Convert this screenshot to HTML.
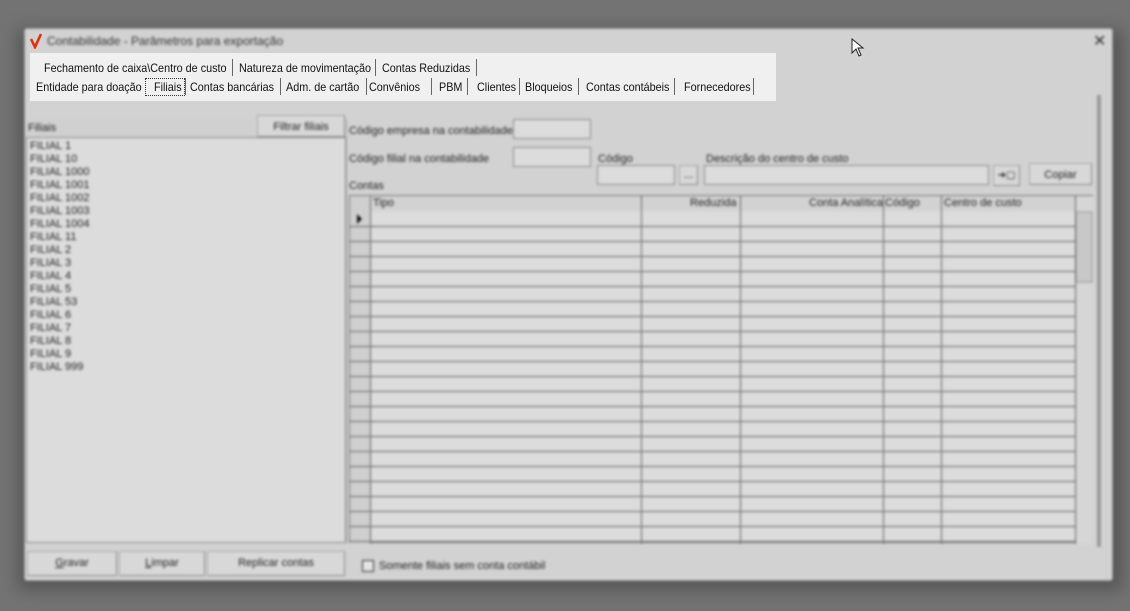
<!DOCTYPE html>
<html><head><meta charset="utf-8"><style>
*{box-sizing:border-box;margin:0;padding:0}
body{width:1130px;height:611px;background:#737373;overflow:hidden;position:relative;font-family:"Liberation Sans",sans-serif;font-size:11px;color:#222}
.abs{position:absolute}
#shadow{left:18px;top:30px;width:1104px;height:560px;background:#555;filter:blur(8px)}
#win{left:24px;top:28px;width:1089px;height:553px;background:#d2d2d2;border:1px solid #999;border-radius:3px;filter:blur(1.2px)}
.box{background:#dcdcdc;border:1px solid #8a8a8a}
.btn{background:#d8d8d8;border:1px solid #aaa;border-right-color:#888;border-bottom-color:#888;text-align:center;line-height:22px}
.t{position:absolute;white-space:nowrap}
#tabs{left:30px;top:53px;width:746px;height:48px;background:#f0f0f0;font-size:12px;color:#111}
.tx{position:absolute;white-space:nowrap;transform:scaleX(0.9);transform-origin:0 0;line-height:16px}
.sep{position:absolute;width:1px;height:17px;background:#666}
</style></head><body>
<div id="shadow" class="abs"></div>
<div id="win" class="abs">
  <div class="t" style="left:22px;top:5px;font-size:12px;color:#333">Contabilidade - Parâmetros para exportação</div>
  <div class="t" style="left:1068px;top:2px;font-size:16px;color:#333">✕</div>
  <div class="abs" style="left:1072px;top:66px;width:4px;height:452px;background:#999"></div>
  <div class="abs" style="left:0;top:90px;width:322px;height:424px;background:#d0d0d0;border-right:1px solid #aaa"></div>
  <div class="t" style="left:3px;top:93px">Filiais</div>
  <div class="abs btn" style="left:232px;top:86px;width:88px;height:22px">Filtrar filiais</div>
  <div class="abs box" style="left:1px;top:108px;width:320px;height:406px;line-height:13px;padding:2px 3px;font-size:11px">
  FILIAL 1<br>FILIAL 10<br>FILIAL 1000<br>FILIAL 1001<br>FILIAL 1002<br>FILIAL 1003<br>FILIAL 1004<br>FILIAL 11<br>FILIAL 2<br>FILIAL 3<br>FILIAL 4<br>FILIAL 5<br>FILIAL 53<br>FILIAL 6<br>FILIAL 7<br>FILIAL 8<br>FILIAL 9<br>FILIAL 999</div>
  <div class="t" style="left:324px;top:96px">Código empresa na contabilidade</div>
  <div class="abs box" style="left:488px;top:90px;width:78px;height:20px"></div>
  <div class="t" style="left:324px;top:124px">Código filial na contabilidade</div>
  <div class="abs box" style="left:488px;top:118px;width:78px;height:20px"></div>
  <div class="t" style="left:573px;top:124px">Código</div>
  <div class="abs box" style="left:572px;top:136px;width:78px;height:20px"></div>
  <div class="abs btn" style="left:654px;top:136px;width:19px;height:20px;line-height:18px">...</div>
  <div class="t" style="left:681px;top:124px">Descrição do centro de custo</div>
  <div class="abs box" style="left:679px;top:136px;width:285px;height:20px"></div>
  <div class="abs btn" style="left:968px;top:136px;width:27px;height:21px;line-height:19px;font-size:10px">➜▢</div>
  <div class="abs btn" style="left:1004px;top:134px;width:63px;height:22px">Copiar</div>
  <div class="t" style="left:324px;top:151px">Contas</div>
  <div class="abs" style="left:324px;top:166px;width:744px;height:348px;background:#dcdcdc;border:1px solid #777">
    <svg width="744" height="348" style="position:absolute;left:0;top:0">
      <rect x="0" y="0" width="744" height="15" fill="#d2d2d2"/>
      <rect x="0" y="0" width="20" height="348" fill="#cfcfcf"/>
      <rect x="725" y="0" width="18" height="348" fill="#d6d6d6"/>
      <rect x="726" y="16" width="16" height="70" fill="#c8c8c8" stroke="#999"/>
      <g stroke="#666" stroke-width="1">
        <line x1="20.5" y1="0" x2="20.5" y2="348"/>
        <line x1="291.5" y1="0" x2="291.5" y2="348"/>
        <line x1="390.5" y1="0" x2="390.5" y2="348"/>
        <line x1="533.5" y1="0" x2="533.5" y2="348"/>
        <line x1="591.5" y1="0" x2="591.5" y2="348"/>
        <line x1="725.5" y1="0" x2="725.5" y2="348"/>
      </g>
      <g stroke="#777" stroke-width="1.3" id="rows"></g>
      <polygon points="7,18 12,23 7,28" fill="#111"/>
    </svg>
    <div class="t" style="left:23px;top:1px">Tipo</div>
    <div class="t" style="left:340px;top:1px">Reduzida</div>
    <div class="t" style="left:459px;top:1px">Conta Analítica</div>
    <div class="t" style="left:535px;top:1px">Código</div>
    <div class="t" style="left:594px;top:1px">Centro de custo</div>
  </div>
  <div class="abs btn" style="left:2px;top:522px;width:90px;height:25px"><u>G</u>ravar</div>
  <div class="abs btn" style="left:94px;top:522px;width:86px;height:25px"><u>L</u>impar</div>
  <div class="abs btn" style="left:182px;top:522px;width:138px;height:25px">Replicar contas</div>
  <div class="abs" style="left:337px;top:531px;width:12px;height:12px;border:1px solid #333;background:#e4e4e4"></div>
  <div class="t" style="left:354px;top:531px">Somente filiais sem conta contábil</div>
</div>
<div id="tabs" class="abs">
  <div class="tx" style="left:14px;top:7px">Fechamento de caixa\Centro de custo</div>
  <div class="sep" style="left:202px;top:6px"></div>
  <div class="tx" style="left:209px;top:7px">Natureza de movimentação</div>
  <div class="sep" style="left:345px;top:6px"></div>
  <div class="tx" style="left:352px;top:7px">Contas Reduzidas</div>
  <div class="sep" style="left:446px;top:6px"></div>

  <div class="tx" style="left:6px;top:26px">Entidade para doação</div>
  <div class="abs" style="left:115px;top:25px;width:40px;height:18px;border:1px dotted #333"></div>
  <div class="tx" style="left:124px;top:26px">Filiais</div>
  <div class="sep" style="left:155px;top:25px"></div>
  <div class="tx" style="left:160px;top:26px">Contas bancárias</div>
  <div class="sep" style="left:250px;top:25px"></div>
  <div class="tx" style="left:256px;top:26px">Adm. de cartão</div>
  <div class="sep" style="left:336px;top:25px"></div>
  <div class="tx" style="left:339px;top:26px">Convênios</div>
  <div class="sep" style="left:401px;top:25px"></div>
  <div class="tx" style="left:409px;top:26px">PBM</div>
  <div class="sep" style="left:437px;top:25px"></div>
  <div class="tx" style="left:447px;top:26px">Clientes</div>
  <div class="sep" style="left:489px;top:25px"></div>
  <div class="tx" style="left:495px;top:26px">Bloqueios</div>
  <div class="sep" style="left:548px;top:25px"></div>
  <div class="tx" style="left:556px;top:26px">Contas contábeis</div>
  <div class="sep" style="left:644px;top:25px"></div>
  <div class="tx" style="left:654px;top:26px">Fornecedores</div>
  <div class="sep" style="left:723px;top:25px"></div>
</div>
<svg class="abs" style="left:30px;top:33px" width="12" height="16"><path d="M1 6 L5 14 L11 1" stroke="#e03010" stroke-width="2.6" fill="none"/></svg>
<svg class="abs" style="left:851px;top:38px" width="14" height="20"><path d="M1 1 L1 15 L5 11 L8 18 L10 17 L7 10 L12 10 Z" fill="#fff" stroke="#222" stroke-width="1"/></svg>
<script>
var g=document.getElementById('rows'),s='';
for(var y=30;y<348;y+=15){s+='<line x1="0" y1="'+(y+0.5)+'" x2="725" y2="'+(y+0.5)+'"/>';}
g.innerHTML=s;
</script>
</body></html>
